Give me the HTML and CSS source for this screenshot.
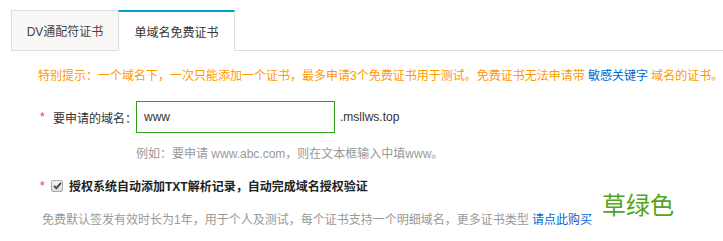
FILE: index.html
```html
<!DOCTYPE html>
<html lang="zh-CN">
<head>
<meta charset="utf-8">
<link rel="stylesheet" href="styles.css">
</head>
<body>
<div class="page">
  <div class="tabs">
    <div class="tab">DV通配符证书</div>
    <div class="tab active">单域名免费证书</div>
  </div>
  <div class="content">
    <p class="notice">特别提示：一个域名下，一次只能添加一个证书，最多申请3个免费证书用于测试。免费证书无法申请带 <a class="link">敏感关键字</a> 域名的证书。</p>
    <div class="row domain-row">
      <span class="req">*</span>
      <label class="label">要申请的域名：</label>
      <div class="input">www</div>
      <span class="suffix">.msllws.top</span>
    </div>
    <p class="hint">例如：要申请 www.abc.com，则在文本框输入中填www。</p>
    <div class="row check-row">
      <span class="req">*</span>
      <span class="checkbox"><svg width="9" height="9" viewBox="0 0 9 9"><path d="M1 4.8 L3.4 7.2 L8 1.8" fill="none" stroke="#444" stroke-width="1.8"/></svg></span>
      <span class="check-label">授权系统自动添加TXT解析记录，自动完成域名授权验证</span>
    </div>
    <p class="foot">免费默认签发有效时长为1年，用于个人及测试，每个证书支持一个明细域名，更多证书类型 <a class="link">请点此购买</a></p>
  </div>
  <div class="note">草绿色</div>
</div>
</body>
</html>
```
FILE: styles.css
```css
* { box-sizing: border-box; }
body {
  margin: 0;
  background: #fff;
  font-family: "Liberation Sans", "Noto Sans CJK SC", sans-serif;
  font-size: 12px;
  color: #333;
}
.page { position: relative; width: 723px; height: 241px; overflow: hidden; }
.tabs {
  display: flex;
  margin-left: 11px;
  padding-top: 10px;
  border-bottom: 1px solid #ddd;
}
.tab {
  width: 108px;
  height: 41px;
  margin-bottom: -1px;
  border: 1px solid #ddd;
  background: #f9f8f7;
  display: flex;
  align-items: center;
  justify-content: center;
  color: #444;
}
.tab.active {
  width: 117px;
  margin-left: -1px;
  background: #fff;
  border-top: 2px solid #00a2ca;
  border-bottom-color: #fff;
  color: #333;
}
.content { padding-left: 38px; }
.notice {
  margin: 17px 0 0;
  line-height: 16px;
  color: #ff9900;
  white-space: nowrap;
}
.link { color: #0066cc; text-decoration: none; }
.row { display: flex; align-items: center; }
.domain-row { margin-top: 17px; padding-left: 2px; }
.req { color: #e4393c; width: 13px; font-size: 12px; }
.label { color: #333; }
.input {
  width: 199px;
  height: 32px;
  margin-left: -1px;
  border: 1px solid #2ea31a;
  padding-left: 7px;
  display: flex;
  align-items: center;
  color: #333;
}
.suffix { margin-left: 5px; color: #333; }
.hint {
  margin: 13px 0 0 98px;
  line-height: 16px;
  color: #999;
}
.check-row { margin-top: 15px; padding-left: 2px; }
.check-row .req { width: 11px; }
.checkbox {
  width: 12px;
  height: 12px;
  border: 1px solid #aaa;
  border-radius: 2px;
  background: linear-gradient(#f4f4f4, #dcdcdc);
  display: flex;
  align-items: center;
  justify-content: center;
}
.check-label { margin-left: 6px; font-weight: bold; color: #222; }
.foot {
  margin: 18px 0 0 4px;
  line-height: 16px;
  color: #999;
  white-space: nowrap;
}
.note {
  position: absolute;
  left: 602px;
  top: 191px;
  font-size: 24px;
  line-height: 30px;
  color: #52a617;
}
```
